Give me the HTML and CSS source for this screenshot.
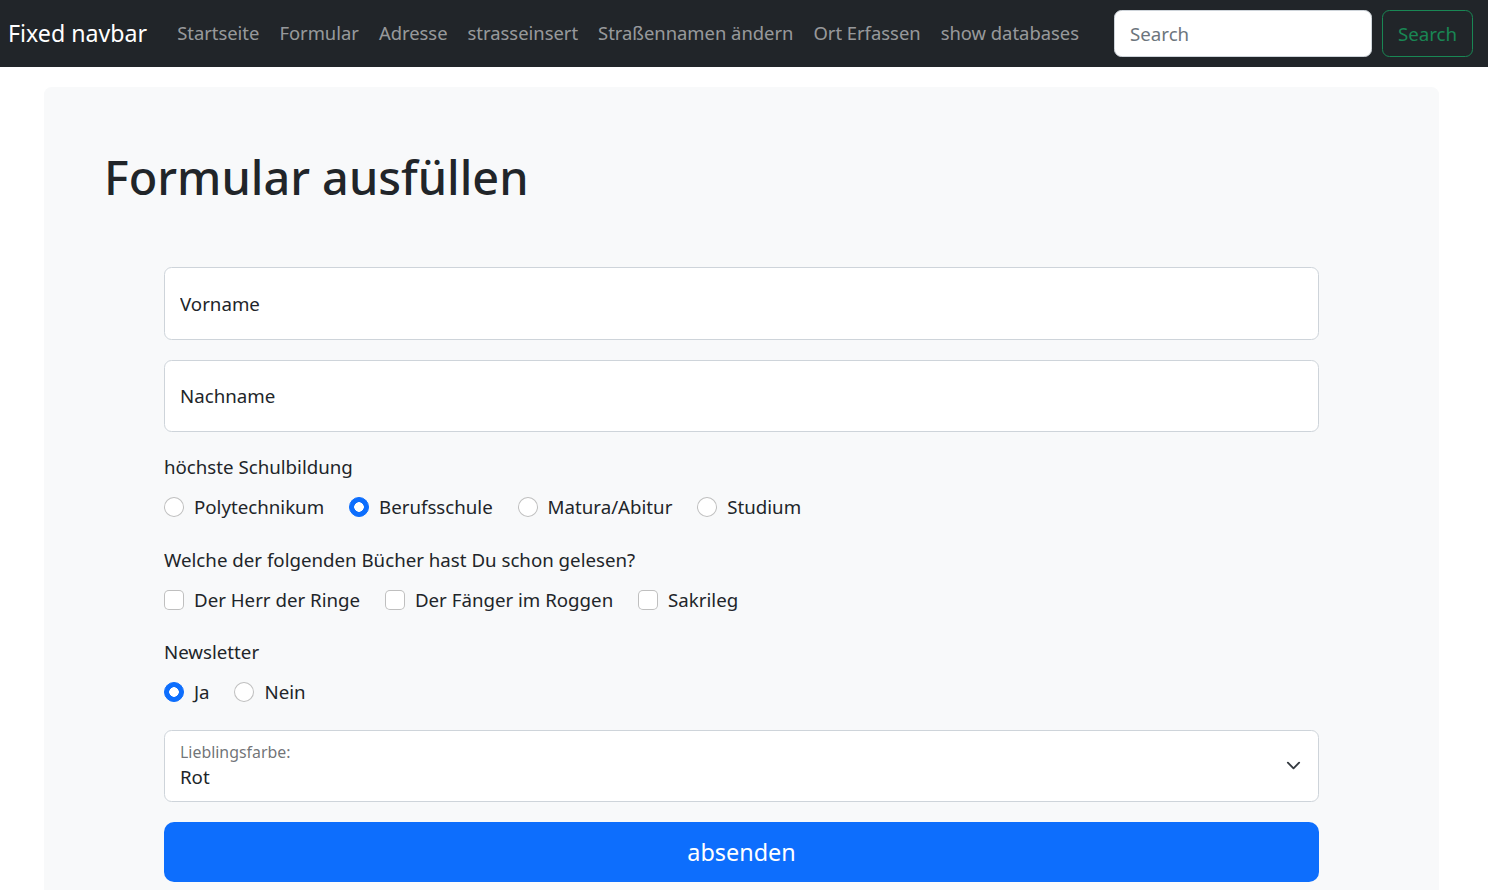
FILE: index.html
```html
<!DOCTYPE html>
<html lang="de">
<head>
<meta charset="utf-8">
<title>Formular</title>
<link rel="stylesheet" href="styles.css">
</head>
<body>
<nav class="navbar">
  <a class="brand" href="#">Fixed navbar</a>
  <ul class="nav">
    <li><a class="nav-link" href="#">Startseite</a></li>
    <li><a class="nav-link" href="#">Formular</a></li>
    <li><a class="nav-link" href="#">Adresse</a></li>
    <li><a class="nav-link" href="#">strasseinsert</a></li>
    <li><a class="nav-link" href="#">Straßennamen ändern</a></li>
    <li><a class="nav-link" href="#">Ort Erfassen</a></li>
    <li><a class="nav-link" href="#">show databases</a></li>
  </ul>
  <form class="search">
    <input class="search-input" type="search" placeholder="Search">
    <button class="search-btn" type="button">Search</button>
  </form>
</nav>
<main class="main">
  <div class="panel">
    <h1 class="title">Formular ausfüllen</h1>
    <form class="form">
      <div class="field">
        <input class="control" type="text" placeholder="Vorname">
      </div>
      <div class="field">
        <input class="control" type="text" placeholder="Nachname">
      </div>
      <div class="field">
        <div class="group-label">höchste Schulbildung</div>
        <div class="checks">
          <label class="check"><input class="radio" type="radio" name="s"><span>Polytechnikum</span></label>
          <label class="check"><input class="radio" type="radio" name="s" checked><span>Berufsschule</span></label>
          <label class="check"><input class="radio" type="radio" name="s"><span>Matura/Abitur</span></label>
          <label class="check"><input class="radio" type="radio" name="s"><span>Studium</span></label>
        </div>
      </div>
      <div class="field">
        <div class="group-label">Welche der folgenden Bücher hast Du schon gelesen?</div>
        <div class="checks">
          <label class="check"><input class="box" type="checkbox"><span>Der Herr der Ringe</span></label>
          <label class="check"><input class="box" type="checkbox"><span>Der Fänger im Roggen</span></label>
          <label class="check"><input class="box" type="checkbox"><span>Sakrileg</span></label>
        </div>
      </div>
      <div class="field">
        <div class="group-label">Newsletter</div>
        <div class="checks">
          <label class="check"><input class="radio" type="radio" name="n" checked><span>Ja</span></label>
          <label class="check"><input class="radio" type="radio" name="n"><span>Nein</span></label>
        </div>
      </div>
      <div class="field">
        <div class="select">
          <span class="select-label">Lieblingsfarbe:</span>
          <span class="select-value">Rot</span>
          <svg class="chevron" viewBox="0 0 16 16" width="15" height="15"><path d="M2 5l6 6 6-6" fill="none" stroke="#343a40" stroke-width="2" stroke-linecap="round" stroke-linejoin="round"/></svg>
        </div>
      </div>
      <button class="submit" type="button">absenden</button>
    </form>
  </div>
</main>
</body>
</html>
```

FILE: styles.css
```css
* { box-sizing: border-box; }
body {
  margin: 0;
  font-family: "Noto Sans", "Open Sans", sans-serif;
  font-size: 18.7px;
  line-height: 30px;
  color: #212529;
  background: #fff;
}
.navbar {
  display: flex;
  align-items: center;
  height: 67px;
  background: #212529;
  padding: 0 15px 0 8px;
}
.brand {
  color: #fff;
  font-size: 23.2px;
  line-height: 37px;
  text-decoration: none;
  margin-right: 20px;
  white-space: nowrap;
}
.nav {
  display: flex;
  list-style: none;
  margin: 0;
  padding: 0;
  flex: 1;
}
.nav-link {
  display: block;
  padding: 0 10px;
  font-size: 18.4px;
  line-height: 30px;
  margin-top: -1px;
  color: rgba(255,255,255,.55);
  text-decoration: none;
  white-space: nowrap;
}
.search {
  display: flex;
  align-items: center;
  gap: 10px;
}
.search-input {
  width: 258px;
  height: 47px;
  border: 1px solid #ced4da;
  border-radius: 7.5px;
  padding: 0 15px;
  font: inherit;
  color: #212529;
  background: #fff;
}
.search-input::placeholder { color: #6c757d; }
.search-btn {
  width: 91px;
  height: 47px;
  padding: 0;
  border: 1px solid #198754;
  border-radius: 7.5px;
  background: transparent;
  color: #198754;
  font: inherit;
}
.main {
  padding: 20px 49px 0 44px;
}
.panel {
  background: #f8f9fa;
  border-radius: 7.5px;
  padding: 60px 60px 60px;
  min-height: 900px;
}
.title {
  margin: 0 0 10px;
  font-size: 46.8px;
  font-weight: 500;
  line-height: 60px;
}
.form {
  padding: 50px 60px 0;
}
.field { margin-bottom: 20px; }
.control {
  display: block;
  width: 100%;
  height: 72.5px;
  border: 1px solid #ced4da;
  border-radius: 7.5px;
  padding: 0 15px;
  font: inherit;
  background: #fff;
}
.control::placeholder { color: #212529; }
.group-label { margin-bottom: 10px; }
.checks { line-height: 30px; height: 32.5px; }
.check {
  display: inline-flex;
  align-items: center;
  height: 30px;
  margin: 0 20px 0 0;
  vertical-align: top;
}
.check span { margin-left: 10px; }
.radio, .box {
  appearance: none;
  -webkit-appearance: none;
  width: 20px;
  height: 20px;
  margin: 0;
  border: 1px solid rgba(0,0,0,.25);
  background: #fff;
  flex: none;
}
.radio { border-radius: 50%; }
.box { border-radius: 5px; }
.radio:checked {
  background: #0d6efd radial-gradient(circle, #fff 0 4.5px, transparent 5px);
  border-color: #0d6efd;
}
.select {
  position: relative;
  height: 72px;
  border: 1px solid #ced4da;
  border-radius: 7.5px;
  background: #fff;
  padding: 9px 15px 0;
}
.select-label {
  display: block;
  font-size: 15.9px;
  line-height: 24px;
  color: rgba(33,37,41,.65);
}
.select-value {
  display: block;
  line-height: 26px;
}
.chevron {
  position: absolute;
  right: 17px;
  top: 27px;
}
.submit {
  display: block;
  width: 100%;
  height: 60px;
  border: 0;
  border-radius: 10px;
  background: #0d6efd;
  color: #fff;
  font: inherit;
  font-size: 23.4px;
}
```
